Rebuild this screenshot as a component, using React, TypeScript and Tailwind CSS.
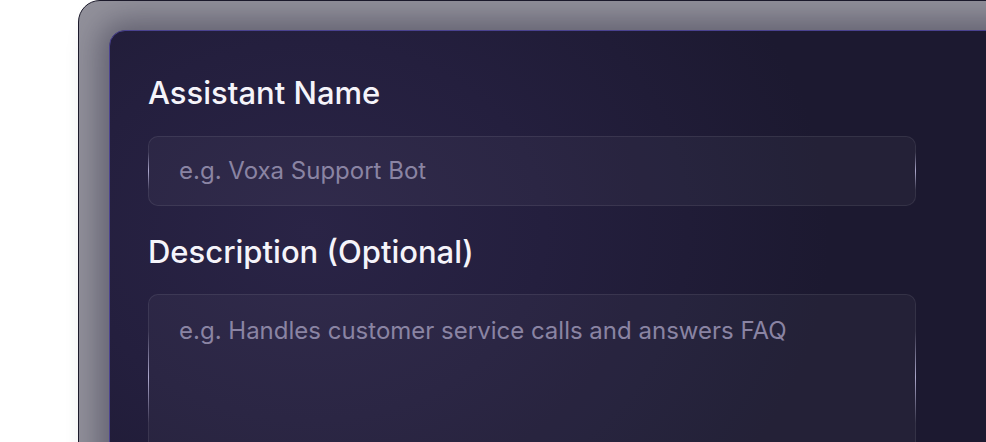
import React from "react";

function EdgeGlow({ side }: { side: "left" | "right" }) {
  return (
    <div
      className={
        "pointer-events-none absolute top-[22%] bottom-[22%] w-px bg-[linear-gradient(to_bottom,transparent,rgba(200,195,235,0.8),transparent)] " +
        (side === "left" ? "left-[-1px]" : "right-[-1px]")
      }
    />
  );
}

export default function App() {
  return (
    <div className="h-[442px] w-[986px] overflow-hidden bg-white font-['Inter',sans-serif]">
      <div className="ml-[78px] w-[1200px] h-[600px] rounded-tl-[22px] border border-[#1c1a2b] bg-[#92919b] pt-[29px] pl-[30px]">
        <div className="h-[560px] rounded-tl-[16px] border border-[#4a4290] bg-[#1e1a34] bg-[radial-gradient(ellipse_520px_420px_at_200px_200px,#2a2446_0%,#241f3e_45%,#1c1930_100%)] shadow-[0_0_30px_10px_rgba(40,38,60,0.45)] pl-[38px] pt-[44px]">
          <div className="flex w-[768px] flex-col">
            <label className="text-[31px] leading-[36px] font-medium text-[#f5f4fa]">
              Assistant Name
            </label>
            <div className="relative mt-[25px] h-[70px] rounded-[10px] border border-[rgba(255,255,255,0.08)] bg-[rgba(255,255,255,0.035)] flex items-center pl-[30px]">
              <span className="text-[24px] text-[#8a84a3]">e.g. Voxa Support Bot</span>
              <EdgeGlow side="left" />
              <EdgeGlow side="right" />
            </div>
            <label className="mt-[28px] text-[31px] leading-[36px] font-medium text-[#f5f4fa]">
              Description (Optional)
            </label>
            <div className="relative mt-[24px] h-[166px] rounded-[10px] border border-[rgba(255,255,255,0.08)] bg-[rgba(255,255,255,0.035)] pl-[30px] pt-[19px]">
              <span className="text-[24px] leading-[33px] text-[#8a84a3]">
                e.g. Handles customer service calls and answers FAQ
              </span>
              <EdgeGlow side="left" />
              <EdgeGlow side="right" />
            </div>
          </div>
        </div>
      </div>
    </div>
  );
}
